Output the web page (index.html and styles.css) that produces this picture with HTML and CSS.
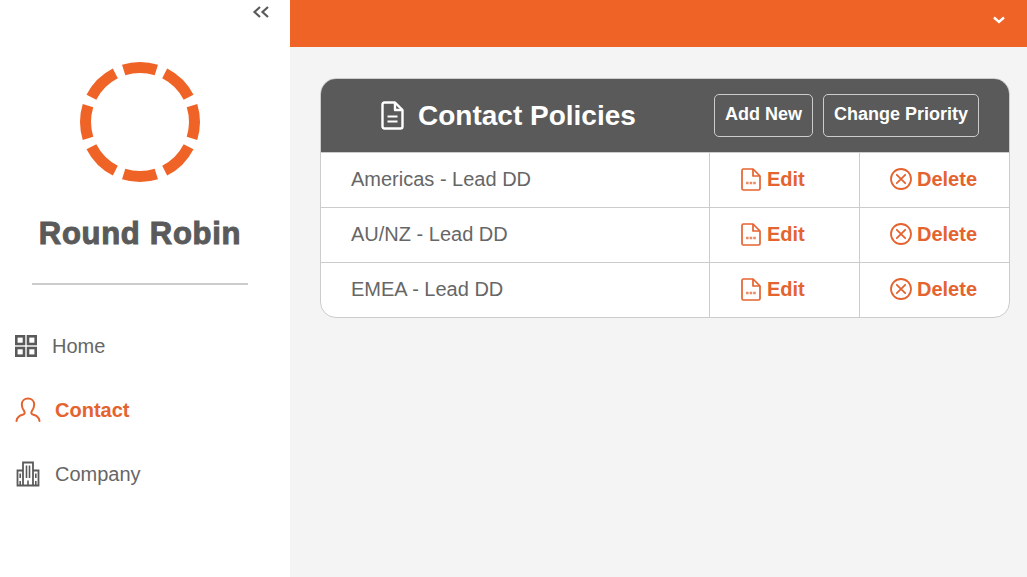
FILE: index.html
```html
<!DOCTYPE html>
<html lang="en">
<head>
    <meta charset="UTF-8">
    <title>Round Robin - Contact Policies</title>
    <link rel="stylesheet" href="styles.css">
</head>
<body>
    <div class="layout">
        <aside class="sidebar">
            <div class="collapse">
                <svg width="18" height="12" viewBox="0 0 18 12" fill="none" stroke="#5a5a5a" stroke-width="2.2">
                    <path d="M8 1 L2.5 6 L8 11"/>
                    <path d="M16 1 L10.5 6 L16 11"/>
                </svg>
            </div>
            <svg class="logo" width="120" height="120" viewBox="0 0 120 120">
                <circle cx="60" cy="60" r="54.5" fill="none" stroke="#ef6326" stroke-width="11" pathLength="360" stroke-dasharray="35 9.5 36 9.5" stroke-dashoffset="17.5" transform="rotate(-90 60 60)"/>
            </svg>
            <div class="brand">Round Robin</div>
            <hr class="divider">
            <nav class="nav">
                <a class="nav-item home">
                    <svg width="22" height="22" viewBox="0 0 22 22" fill="none" stroke="#5a5a5a" stroke-width="2.6">
                        <rect x="1.3" y="1.3" width="7.7" height="7.7"/>
                        <rect x="13" y="1.3" width="7.7" height="7.7"/>
                        <rect x="1.3" y="13" width="7.7" height="7.7"/>
                        <rect x="13" y="13" width="7.7" height="7.7"/>
                    </svg>
                    <span>Home</span>
                </a>
                <a class="nav-item active">
                    <svg width="26" height="26" viewBox="0 0 26 26" fill="none" stroke="#e4632f" stroke-width="2" stroke-linecap="round">
                        <path d="M1.5 24 C2 20 4 18.8 7.5 17.8 C9.8 17 10.2 15.8 9.2 14.2 C7.6 12 6.8 10 6.8 7.5 C6.8 4 9.5 1.5 13 1.5 C16.5 1.5 19.2 4 19.2 7.5 C19.2 10 18.4 12 16.8 14.2 C15.8 15.8 16.2 17 18.5 17.8 C22 18.8 24 20 24.5 24"/>
                    </svg>
                    <span>Contact</span>
                </a>
                <a class="nav-item company">
                    <svg width="24" height="26" viewBox="0 0 24 26" fill="none" stroke="#5a5a5a" stroke-width="1.8">
                        <path d="M7 24.5 V1.5 H17 V24.5"/>
                        <path d="M7 9.5 H1.5 V24.5 H22.5 V9.5 H17"/>
                        <path d="M10.5 4.5 V17 M13.5 4.5 V17 M4.2 12.5 V17 M19.8 12.5 V17 M4.2 20 V24 M19.8 20 V24 M12 19.5 V24" stroke-width="1.6"/>
                    </svg>
                    <span>Company</span>
                </a>
            </nav>
        </aside>
        <div class="main">
            <header class="topbar">
                <svg width="12" height="8" viewBox="0 0 12 8" fill="none" stroke="#fff" stroke-width="2.4">
                    <path d="M1 1.5 L6 6 L11 1.5"/>
                </svg>
            </header>
            <section class="card">
                <div class="card-head">
                    <div class="card-title">
                        <svg width="23" height="29" viewBox="0 0 23 29" fill="none" stroke="#fff" stroke-width="2.4" stroke-linejoin="round">
                            <path d="M3.5 1.5 H14 L21.5 9 V25.5 Q21.5 27.5 19.5 27.5 H3.5 Q1.5 27.5 1.5 25.5 V3.5 Q1.5 1.5 3.5 1.5 Z"/>
                            <path d="M14 1.5 V9 H21.5"/>
                            <path d="M6.5 15.5 H16.5 M6.5 20.5 H16.5" stroke-width="2.2"/>
                        </svg>
                        <h2>Contact Policies</h2>
                    </div>
                    <div class="head-actions">
                        <button class="btn add">Add New</button>
                        <button class="btn">Change Priority</button>
                    </div>
                </div>
                <div class="row">
                    <div class="name">Americas - Lead DD</div>
                    <a class="action edit"><svg class="pdf" viewBox="0 0 20 23"><use href="#pdf-icon"/></svg>Edit</a>
                    <a class="action"><svg class="del" viewBox="0 0 22 22"><use href="#del-icon"/></svg>Delete</a>
                </div>
                <div class="row">
                    <div class="name">AU/NZ - Lead DD</div>
                    <a class="action edit"><svg class="pdf" viewBox="0 0 20 23"><use href="#pdf-icon"/></svg>Edit</a>
                    <a class="action"><svg class="del" viewBox="0 0 22 22"><use href="#del-icon"/></svg>Delete</a>
                </div>
                <div class="row">
                    <div class="name">EMEA - Lead DD</div>
                    <a class="action edit"><svg class="pdf" viewBox="0 0 20 23"><use href="#pdf-icon"/></svg>Edit</a>
                    <a class="action"><svg class="del" viewBox="0 0 22 22"><use href="#del-icon"/></svg>Delete</a>
                </div>
            </section>
        </div>
    </div>

    <svg class="defs" width="0" height="0">
        <symbol id="pdf-icon" viewBox="0 0 20 23">
            <g fill="none" stroke="#e4632f" stroke-width="1.7" stroke-linejoin="round">
                <path d="M2.5 1 H12 L19 8 V20.5 Q19 22 17.5 22 H2.5 Q1 22 1 20.5 V2.5 Q1 1 2.5 1 Z"/>
                <path d="M12 1 V8 H19"/>
                <path d="M5 15 H15" stroke-width="2.4" stroke-dasharray="2.6 1" opacity="0.75"/>
            </g>
        </symbol>
        <symbol id="del-icon" viewBox="0 0 22 22">
            <g fill="none" stroke="#e4632f" stroke-width="1.8" stroke-linecap="round">
                <circle cx="11" cy="11" r="10"/>
                <path d="M6.8 6.8 L15.2 15.2 M15.2 6.8 L6.8 15.2"/>
            </g>
        </symbol>
    </svg>
</body>
</html>
```

FILE: styles.css
```css
* {
    box-sizing: border-box;
}

html, body {
    height: 100%;
}

body {
    margin: 0;
    overflow: hidden;
    font-family: "Liberation Sans", Arial, sans-serif;
    color: #666;
    background-color: #f4f4f4;
}

.layout {
    display: flex;
    height: 100%;
}

.defs {
    position: absolute;
}

/* Sidebar */
.sidebar {
    width: 290px;
    flex-shrink: 0;
    padding-right: 10px;
    background-color: #fff;
    display: flex;
    flex-direction: column;
}

.collapse {
    display: flex;
    justify-content: flex-end;
    padding: 6px 10px 0 0;
    height: 62px;
}

.logo {
    align-self: center;
}

.brand {
    margin-top: 32px;
    text-align: center;
    font-size: 31px;
    line-height: 40px;
    font-weight: bold;
    letter-spacing: 0.7px;
    color: #5a5a5a;
    -webkit-text-stroke: 1px #5a5a5a;
}

.divider {
    width: 216px;
    height: 2px;
    margin: 29px 0 0 32px;
    border: none;
    background-color: #ccc;
}

.nav {
    margin-top: 29px;
    display: flex;
    flex-direction: column;
}

.nav-item {
    display: flex;
    align-items: center;
    gap: 14px;
    height: 64px;
    padding-left: 15px;
    font-size: 20px;
}

.nav-item.home {
    gap: 15px;
}

.nav-item.company {
    gap: 15px;
    padding-left: 16px;
}

.nav-item.active {
    color: #e4632f;
    font-weight: bold;
}

/* Top bar */
.main {
    flex: 1;
    min-width: 0;
}

.topbar {
    height: 47px;
    background-color: #ef6326;
    display: flex;
    align-items: center;
    justify-content: flex-end;
    padding: 0 22px 7px 0;
}

/* Card */
.card {
    margin: 31px 17px 0 30px;
    background-color: #fff;
    border: 1px solid #ccc;
    border-radius: 16px;
    overflow: hidden;
}

.card-head {
    height: 73px;
    background-color: #5a5a5a;
    display: flex;
    align-items: center;
    justify-content: space-between;
    padding: 0 30px 0 60px;
}

.card-title {
    display: flex;
    align-items: center;
    gap: 14px;
    color: #fff;
}

.card-title h2 {
    margin: 0;
    font-size: 28px;
    font-weight: bold;
}

.head-actions {
    display: flex;
    gap: 10px;
}

.btn {
    height: 43px;
    padding: 0 10px 2px;
    font-family: inherit;
    font-size: 18px;
    font-weight: bold;
    color: #fff;
    background-color: transparent;
    border: 1px solid #ccc;
    border-radius: 5px;
}

.row {
    display: grid;
    grid-template-columns: 388px 150px 1fr;
    height: 55px;
    border-top: 1px solid #ccc;
}

.name {
    display: flex;
    align-items: center;
    padding: 0 0 2px 30px;
    font-size: 20px;
}

.action {
    display: flex;
    align-items: center;
    gap: 5px;
    padding: 0 0 2px 30px;
    border-left: 1px solid #ccc;
    font-size: 20px;
    font-weight: bold;
    color: #e4632f;
}

.action.edit {
    gap: 6px;
    padding-left: 31px;
}

.pdf {
    width: 20px;
    height: 23px;
}

.del {
    width: 22px;
    height: 22px;
}
```
